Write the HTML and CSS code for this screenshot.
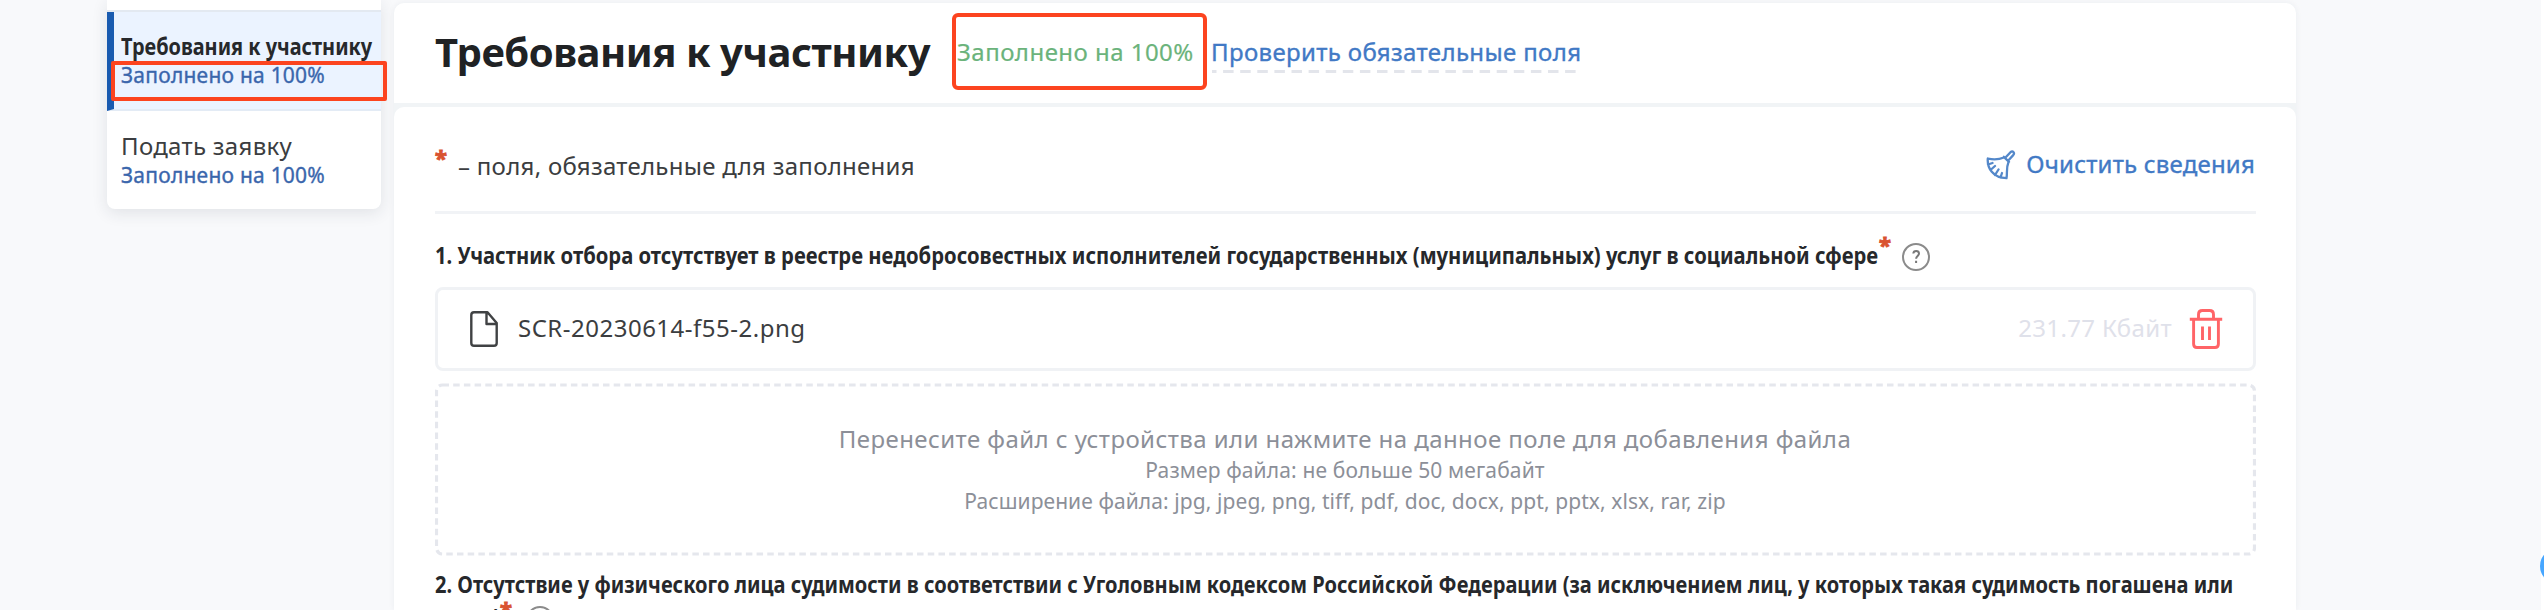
FILE: index.html
```html
<!DOCTYPE html>
<html lang="ru">
<head>
<meta charset="utf-8">
<title>Требования к участнику</title>
<link rel="stylesheet" href="styles.css">
</head>
<body>
<div class="app">
  <nav class="sidebar">
    <div class="step-stub"></div>
    <div class="step active">
      <div class="step-name bold">Требования к участнику</div>
      <div class="step-status">Заполнено на 100%</div>
      <div class="step-mark"></div>
    </div>
    <div class="step">
      <div class="step-name">Подать заявку</div>
      <div class="step-status">Заполнено на 100%</div>
    </div>
  </nav>
  <main class="main">
    <header class="header">
      <h1 class="title">Требования к участнику</h1>
      <div class="filled">Заполнено на 100%</div>
      <a class="check">Проверить обязательные поля
        <svg class="check-line" width="367" height="3"><path d="M0 1.5H367" stroke="#e3e5eb" stroke-width="3" stroke-dasharray="10.5 6.6" stroke-dashoffset="6"/></svg>
      </a>
    </header>
    <section class="card">
      <div class="note-row">
        <span class="star">*</span>
        <span class="note">– поля, обязательные для заполнения</span>
        <svg class="brush" width="30" height="30" viewBox="0 0 30 30" fill="none" stroke="#5488ca" stroke-width="2.300" stroke-linecap="round" stroke-linejoin="round"><path d="M19.500 7.500 24.500 2.200q1.800-1.600 3 0t-.5 3.200L22.300 10.500M17.800 6.800l5.200 5M18 7.500C13 9.500 8 10 1.800 8.500 1 18 7 28 20.500 28.200 21.500 23 20 18 22.500 12M2 14.500l4.500-1.500M4.500 20l4.500-4M9 25l3.500-5.500M14.500 27.500l1.500-4.500"/></svg>
        <a class="clear">Очистить сведения</a>
      </div>
      <div class="label-row">
        <span class="label first">1. Участник отбора отсутствует в реестре недобросовестных исполнителей государственных (муниципальных) услуг в социальной сфере</span>
        <span class="star">*</span>
        <svg class="help" width="30" height="30" viewBox="0 0 30 30" fill="none" stroke="#8b8b8b" stroke-width="2"><circle cx="15" cy="15" r="13"/><path d="M12.300 11.500q.2-2.500 2.900-2.500t2.800 2.500c0 2.300-2.900 2.600-2.900 5.200M15.100 18.800v2.200" stroke="#777"/></svg>
      </div>
      <div class="file">
        <svg class="doc" width="28" height="36" viewBox="0 0 28 36" fill="none" stroke="#404244" stroke-width="2.400" stroke-linejoin="round"><path d="M4 1.300H17.500L26.700 12V32q0 2.700-2.700 2.700H4q-2.700 0-2.700-2.700V4q0-2.700 2.700-2.700zM16.500 1.500V13H26.500"/></svg>
        <span class="file-name">SCR-20230614-f55-2.png</span>
        <span class="file-size">231.77 Кбайт</span>
        <svg class="trash" width="34" height="40" viewBox="0 0 34 40" fill="none" stroke="#ff6467" stroke-width="2.900" stroke-linejoin="round"><path d="M.8 10.300H33.200M9.500 9V5.500q0-4 4-4h7q4 0 4 4V9M4.600 10.500V35q0 3.500 3.400 3.500H26q3.400 0 3.400-3.500V10.500M13.500 17.500V31M20.500 17.500V31"/></svg>
      </div>
      <div class="drop">
        <svg class="drop-frame" width="1821" height="173"><rect x="1.500" y="2" width="1818" height="169" rx="6" fill="none" stroke="#e5e7ed" stroke-width="3.200" stroke-dasharray="6.500 4.200"/></svg>
        <div class="drop-main">Перенесите файл с устройства или нажмите на данное поле для добавления файла</div>
        <div class="drop-size">Размер файла: не больше 50 мегабайт</div>
        <div class="drop-ext">Расширение файла: jpg, jpeg, png, tiff, pdf, doc, docx, ppt, pptx, xlsx, rar, zip</div>
      </div>
      <div class="label second">2. Отсутствие у физического лица судимости в соответствии с Уголовным кодексом Российской Федерации (за исключением лиц, у которых такая судимость погашена или</div>
      <div class="label-row next">
        <span class="label tail">снята)</span>
        <span class="star">*</span>
        <svg class="help" width="30" height="30" viewBox="0 0 30 30" fill="none" stroke="#8b8b8b" stroke-width="2"><circle cx="15" cy="15" r="13"/></svg>
      </div>
    </section>
  </main>
</div>
<div class="chat"></div>
</body>
</html>
```
FILE: styles.css
```css
* { box-sizing: border-box; }
body {
  position: relative;
  width: 2544px;
  height: 616px;
  margin: 0;
  overflow: hidden;
  background: #fff;
  color: #3b3d40;
  font: 24px/30px "Noto Sans", sans-serif;
  white-space: nowrap;
}
.app {
  display: flex;
  width: 2541px;
  height: 610px;
  overflow: hidden;
  background: #f8f9fb;
}

.sidebar {
  width: 274px;
  height: 209px;
  margin-left: 107px;
  background: #fff;
  border-radius: 0 0 8px 8px;
  box-shadow: 0 4px 16px rgba(40, 50, 60, .11);
}
.step-stub { height: 12px; border-bottom: 2px solid #e3e9f1; }
.step { position: relative; height: 98px; padding: 20px 0 0 14px; }
.step.active {
  height: 99px;
  padding: 19px 0 0 7px;
  border-left: 7px solid #195bb0;
  border-bottom: 2px solid #e3ebf5;
  background: #ebf3ff;
}
.step-name { letter-spacing: .3px; }
.step-name.bold {
  margin-bottom: 2px;
  font-weight: 700;
  letter-spacing: 0;
  color: #26282b;
  transform: scaleX(.829);
  transform-origin: left;
}
.step-status {
  font-size: 21px;
  line-height: 24px;
  letter-spacing: .23px;
  margin-top: 2px;
  color: #3a66ac;
  -webkit-text-stroke: .35px #3a66ac;
}
.step-mark {
  position: absolute;
  left: -3px;
  top: 49px;
  width: 276px;
  height: 40px;
  border: 4px solid #fc441f;
  border-radius: 2px;
}

.main {
  width: 1902px;
  margin: 3px 0 0 13px;
  background: #f1f4f6;
  border-radius: 10px 10px 0 0;
  box-shadow: 0 0 6px rgba(40, 50, 60, .06);
}
.header {
  display: flex;
  height: 100px;
  padding: 10px 0 0 41px;
  background: #fff;
  border-radius: 10px 10px 0 0;
}
.title {
  width: 517px;
  margin: 0;
  font-size: 40px;
  line-height: 77px;
  letter-spacing: -.45px;
  color: #202224;
}
.filled {
  width: 255px;
  height: 77px;
  padding-left: 1px;
  border: 4px solid #fc441f;
  border-radius: 6px;
  line-height: 69px;
  letter-spacing: .47px;
  color: #6bb37b;
  -webkit-text-stroke: .2px #6bb37b;
}
.check {
  position: relative;
  margin-left: 4px;
  line-height: 77px;
  letter-spacing: .36px;
  color: #4179c5;
  -webkit-text-stroke: .35px #4179c5;
}
.check-line { position: absolute; left: 1px; top: 57px; }

.card {
  height: 520px;
  margin-top: 4px;
  padding: 44px 40px 0 41px;
  background: #fff;
  border-radius: 10px 10px 0 0;
}
.star {
  width: 12px;
  font-size: 22px;
  line-height: 20px;
  font-weight: 700;
  color: #d9532f;
  -webkit-text-stroke: 1px #d9532f;
}
.note-row {
  display: flex;
  height: 63px;
  border-bottom: 3px solid #f1f3f6;
}
.note-row .star { margin-top: -4px; width: 23px; }
.note { letter-spacing: .28px; }
.brush { margin: -1px 0 0 auto; }
.clear {
  margin: -2px 1px 0 10px;
  letter-spacing: .2px;
  color: #4179c5;
  -webkit-text-stroke: .35px #4179c5;
}

.label-row { display: flex; height: 30px; margin-top: 26px; }
.label {
  display: block;
  font-weight: 700;
  color: #26282b;
  transform-origin: left;
}
.first { width: 1444px; transform: scaleX(.843); }
.label-row .star { margin-top: -6px; }
.help { margin: 2px 0 0 10px; }

.file {
  display: flex;
  align-items: center;
  height: 84px;
  margin-top: 17px;
  padding: 0 30px 0 33px;
  border: 3px solid #f0f2f5;
  border-radius: 8px;
}
.doc { margin-left: -1px; }
.file-name { margin: -3px 0 0 20px; letter-spacing: .5px; }
.file-size { margin: -3px 17px 0 auto; letter-spacing: .35px; color: #dfe1ea; }
.trash { flex: none; }

.drop {
  position: relative;
  height: 173px;
  margin-top: 12px;
  padding: 41px 1px 0 0;
  text-align: center;
  color: #8c8f98;
}
.drop-frame { position: absolute; left: 0; top: 0; }
.drop-main { letter-spacing: .43px; }
.drop-size { font-size: 21px; line-height: 32px; letter-spacing: .13px; }
.drop-ext { font-size: 21px; line-height: 31px; letter-spacing: .08px; }

.second { height: 32px; margin-top: 13px; transform: scaleX(.836); }
.label-row.next { margin-top: 1px; }
.next .star { margin-top: -3px; }
.tail { width: 65px; transform: scaleX(.843); }
.next .help { margin: 3px 0 0 13px; }

.chat {
  position: absolute;
  left: 2540px;
  top: 548px;
  width: 36px;
  height: 36px;
  border-radius: 50%;
  background: #46a6ff;
}
```
